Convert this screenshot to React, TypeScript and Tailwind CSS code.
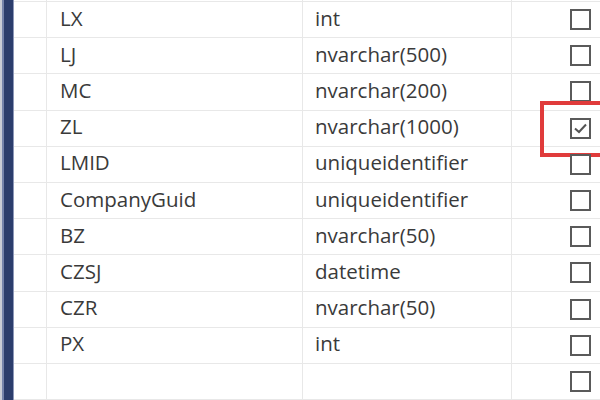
import React from 'react';

const ROWS: [string, string, boolean][] = [
  ['LX', 'int', false],
  ['LJ', 'nvarchar(500)', false],
  ['MC', 'nvarchar(200)', false],
  ['ZL', 'nvarchar(1000)', true],
  ['LMID', 'uniqueidentifier', false],
  ['CompanyGuid', 'uniqueidentifier', false],
  ['BZ', 'nvarchar(50)', false],
  ['CZSJ', 'datetime', false],
  ['CZR', 'nvarchar(50)', false],
  ['PX', 'int', false],
  ['', '', false],
];

function Check({ checked }: { checked: boolean }) {
  return (
    <div className="w-[21px] h-[21px] border-2 border-[#5a5a5a] bg-white flex items-center justify-center">
      {checked && (
        <svg width="15" height="12" viewBox="0 0 15 12">
          <path d="M2 6.5 L6 10 L13 2.5" fill="none" stroke="#555" strokeWidth="2" />
        </svg>
      )}
    </div>
  );
}

function Row({ name, type, checked }: { name: string; type: string; checked: boolean }) {
  return (
    <div className="flex h-[36.2px] border-b border-[#e8e8e8] relative">
      <div className="w-[33px] border-r border-[#e8e8e8]" />
      <div className="w-[256px] border-r border-[#e8e8e8] flex items-center pl-[13px] pb-[3px]">{name}</div>
      <div className="w-[209px] border-r border-[#e8e8e8] flex items-center pl-[12px] pb-[3px]">{type}</div>
      <div className="flex-1 flex items-center pl-[58px]">
        <Check checked={checked} />
      </div>
      {checked && (
        <div className="absolute left-[526px] top-[-10px] w-[90px] h-[56px] border-4 border-[#e03b3b]" />
      )}
    </div>
  );
}

export default function App() {
  return (
    <div
      className="w-[600px] h-[400px] overflow-hidden bg-white flex text-[#3a3a3a] text-[20.5px]"
      style={{ fontFamily: '"Open Sans", "Liberation Sans", sans-serif' }}
    >
      <div className="w-[14px] h-full flex">
        <div className="w-[2px] bg-[#c9cdd6]" />
        <div className="w-[2px] bg-[#7584ab]" />
        <div className="w-[9px] bg-[#2b3d6c]" />
        <div className="w-[1px] bg-[#8d98b8]" />
      </div>
      <div className="flex-1 flex flex-col">
        <div className="flex h-[2px] border-b border-[#e8e8e8]">
          <div className="w-[33px] border-r border-[#e8e8e8]" />
          <div className="w-[256px] border-r border-[#e8e8e8]" />
          <div className="w-[209px] border-r border-[#e8e8e8]" />
        </div>
        {ROWS.map(([n, t, c], i) => (
          <Row key={i} name={n} type={t} checked={c} />
        ))}
      </div>
    </div>
  );
}
